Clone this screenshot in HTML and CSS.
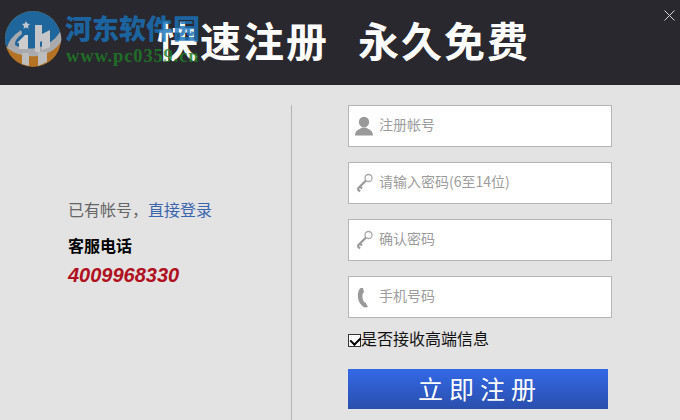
FILE: index.html
```html
<!DOCTYPE html>
<html lang="zh-CN">
<head>
    <meta charset="UTF-8">
    <title>快速注册</title>
    <link rel="stylesheet" href="styles.css">
</head>
<body>
    <div class="window">
        <div class="header">
            <h1><span>快速注册</span><span>永久免费</span></h1>
            <svg class="close" width="11" height="11" viewBox="0 0 11 11"><path d="M.5.5l10 10M10.500.5l-10 10" stroke="#d8d8d8" fill="none"/></svg>
        </div>

        <!-- watermark over the header -->
        <div class="watermark">
            <svg class="logo" width="58" height="58" viewBox="0 0 58 58">
                <circle cx="29" cy="29" r="28" fill="#d28322"/>
                <path d="M1 29A28 28 0 0 1 57 29L57 30Q48 43 28 43Q12 43 2 36Q1 33 1 29Z" fill="#1c74b4"/>
                <path d="M3 38Q5 28 17 20L18 24Q10 30 11 35Q18 40 32 38Q48 35 56 22Q58 28 57 32Q50 43 34 46Q16 48 3 38Z" fill="#c6c7ca"/>
                <path d="M13 33L21 25H24V39H15V33Z" fill="#f2f2f2"/>
                <path d="M31 15H38V24L46 20V37L38 40V31L36 32V42H31Z" fill="#e9e9ea"/>
                <path d="M18 43H25V56L18 54ZM34 42H43V52L34 56Z" fill="#dedede"/>
                <path d="M22 11l1.200 2.500 2.800.4-2 2 .5 2.800-2.500-1.300-2.500 1.300.5-2.800-2-2 2.800-.4z" fill="#dfe9f2"/>
            </svg>
            <div>
                <div class="wm-name">河东软件园</div>
                <div class="wm-url">www.pc0359.cn</div>
            </div>
        </div>

        <div class="main">
            <div class="side">
                <p class="login">已有帐号，<a href="#">直接登录</a></p>
                <p class="tel-label">客服电话</p>
                <p class="tel">4009968330</p>
            </div>

            <form class="form">
                <label class="field">
                    <svg width="20" height="20" viewBox="0 0 20 20"><circle cx="10" cy="6" r="5.200" fill="#999"/><path d="M1 19.500C1 14.500 5 13.500 8 11.500H12C15 13.500 19 14.500 19 19.500Z" fill="#999"/></svg>
                    <input type="text" placeholder="注册帐号">
                </label>
                <label class="field">
                    <svg width="20" height="20" viewBox="0 0 20 20"><circle cx="14.500" cy="5" r="3.500" fill="none" stroke="#a8a8a8" stroke-width="1.300"/><path d="M12 7.500L3.500 16M3.500 16l2.500 2.500M6 13.500l2 2" fill="none" stroke="#999" stroke-width="2.200"/></svg>
                    <input type="password" placeholder="请输入密码(6至14位)">
                </label>
                <label class="field">
                    <svg width="20" height="20" viewBox="0 0 20 20"><circle cx="14.500" cy="5" r="3.500" fill="none" stroke="#a8a8a8" stroke-width="1.300"/><path d="M12 7.500L3.500 16M3.500 16l2.500 2.500M6 13.500l2 2" fill="none" stroke="#999" stroke-width="2.200"/></svg>
                    <input type="password" placeholder="确认密码">
                </label>
                <label class="field">
                    <svg width="20" height="22" viewBox="0 0 20 22"><path d="M6.500 2C4 4.500 3.500 8 4 12C4.500 16 7 19.500 10.500 21.500L14 21L11.500 16.500L10 16C8.500 13.500 8 10 8.700 7.500L10 6.500L9 2Z" fill="#999"/></svg>
                    <input type="tel" placeholder="手机号码">
                </label>
                <label class="agree"><input type="checkbox" checked>是否接收高端信息</label>
                <button type="button" class="submit">立即注册</button>
            </form>
        </div>
    </div>
</body>
</html>
```

FILE: styles.css
```css
* { box-sizing: border-box; }
html, body { margin: 0; padding: 0; }
body { font-family: "Liberation Sans", "Noto Sans CJK SC", sans-serif; background-color: #e3e3e3; overflow: hidden; }
.window { width: 680px; height: 420px; position: relative; overflow: hidden; }

.header { height: 85px; background-color: #29282e; padding-left: 157px; }
.header h1 { margin: 0; padding-top: 14px; display: flex; gap: 29px; font-family: "Noto Sans CJK SC", sans-serif; font-size: 41px; line-height: 50px; font-weight: 700; letter-spacing: 2px; color: #fff; white-space: nowrap; }
.close { position: absolute; top: 10px; right: 5px; }

.watermark { position: absolute; top: 10px; left: 4px; display: flex; gap: 4px; opacity: .82; }
.logo { flex: none; }
.wm-name { font-family: "Noto Sans CJK SC", sans-serif; font-size: 27px; line-height: 36px; font-weight: 900; color: #1a72b8; white-space: nowrap; margin-left: -1px; }
.wm-url { font-family: "Liberation Serif", serif; font-size: 18.500px; line-height: 20px; font-weight: 700; letter-spacing: .85px; color: #1f7d26; white-space: nowrap; }

.main { display: flex; height: 335px; padding-top: 20px; }
.side { width: 292px; padding: 96px 0 0 68px; border-right: 1px solid #b4b4b4; }
.side p { margin: 0; }
.login { font-size: 16px; line-height: 20px; color: #666; }
.login a { color: #3a66ae; text-decoration: none; }
.side .tel-label { margin-top: 14px; font-size: 16px; line-height: 20px; font-weight: 700; color: #000; font-family: "Noto Sans CJK SC", sans-serif; }
.side .tel { margin-top: 9px; font-size: 20px; line-height: 22px; font-weight: 700; font-style: italic; color: #b01020; }

.form { margin-left: 56px; width: 264px; display: flex; flex-direction: column; }
.field { height: 42px; margin-bottom: 15px; padding-left: 5px; display: flex; align-items: center; gap: 5px; background-color: #fff; border: 1px solid #b5b5b5; }
.field svg { flex: none; }
.field input { flex: 1; min-width: 0; margin-top: -4px; border: 0; outline: 0; padding: 0; font-family: "Noto Sans CJK SC", sans-serif; font-size: 14px; color: #333; background: transparent; }
.field input::placeholder { color: #9c9c9c; opacity: 1; }

.agree { margin-top: -3px; display: flex; align-items: center; height: 20px; font-size: 16px; line-height: 20px; color: #111; }
.agree input { appearance: none; flex: none; position: relative; margin: 0; width: 13px; height: 13px; background-color: #fff; border: 1px solid #333; }
.agree input:checked::after { content: ""; position: absolute; left: 3px; top: 0; width: 5px; height: 8px; border: solid #000; border-width: 0 2px 2px 0; transform: rotate(45deg); }
.submit { margin-top: 19px; width: 260px; height: 40px; border: 0; padding: 0 0 3px 4px; background: linear-gradient(#3368e6, #2a4fad); color: #fff; font-family: "Noto Sans CJK SC", sans-serif; font-size: 25px; letter-spacing: 6px; }
```
